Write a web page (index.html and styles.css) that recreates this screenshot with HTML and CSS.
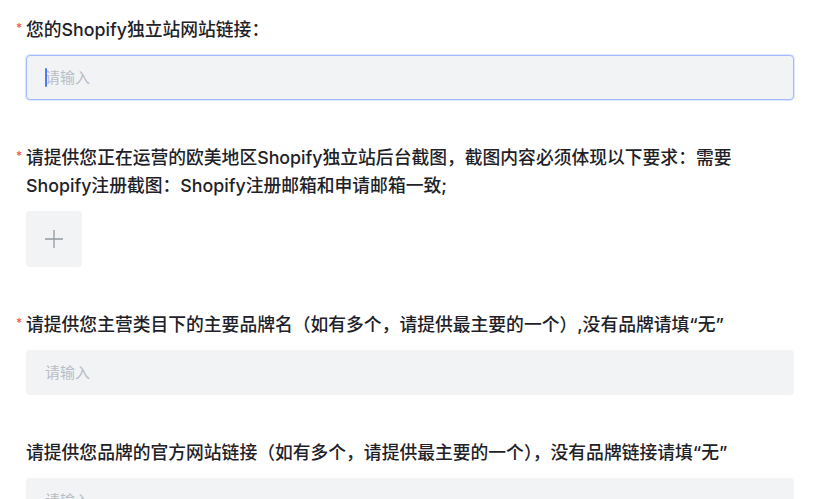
FILE: index.html
```html
<!DOCTYPE html>
<html lang="zh-CN">
<head>
    <meta charset="UTF-8">
    <meta name="viewport" content="width=device-width, initial-scale=1.0">
    <title>申请信息</title>
    <link rel="stylesheet" href="styles.css">
</head>
<body>
    <form class="form">
        <div class="form-item">
            <label class="form-label"><span class="required">*</span>您的Shopify独立站网站链接：</label>
            <div class="field is-focus">
                <span class="caret"></span>
                <input type="text" placeholder="请输入">
            </div>
        </div>

        <div class="form-item">
            <label class="form-label"><span class="required">*</span>请提供您正在运营的欧美地区Shopify独立站后台截图，截图内容必须体现以下要求：需要Shopify注册截图：Shopify注册邮箱和申请邮箱一致;</label>
            <div class="upload">
                <svg width="20" height="20" viewBox="0 0 20 20">
                    <path d="M10 1v18M1 10h18" stroke="#9499a1" stroke-width="1.3" fill="none"/>
                </svg>
            </div>
        </div>

        <div class="form-item">
            <label class="form-label"><span class="required">*</span>请提供您主营类目下的主要品牌名（如有多个，请提供最主要的一个）,没有品牌请填“无”</label>
            <div class="field">
                <input type="text" placeholder="请输入">
            </div>
        </div>

        <div class="form-item">
            <label class="form-label">请提供您品牌的官方网站链接（如有多个，请提供最主要的一个），没有品牌链接请填“无”</label>
            <div class="field">
                <input type="text" placeholder="请输入">
            </div>
        </div>
    </form>
</body>
</html>
```

FILE: styles.css
```css
body {
    margin: 0;
    padding: 16px 25px 0 26px;
    font-family: Inter, "Noto Sans CJK SC", sans-serif;
    color: #1e2228;
    background: #fff;
}
.form-item {
    margin-bottom: 44px;
}
.form-label {
    display: block;
    font-size: 17.8px;
    font-weight: 500;
    line-height: 28px;
    margin-bottom: 11px;
}
.required {
    display: inline-block;
    width: 10px;
    margin-left: -10px;
    color: #f25656;
    font-size: 12px;
    line-height: 12px;
    vertical-align: 4px;
}
.field {
    position: relative;
    height: 45px;
    background: #f2f3f5;
    border: 1px solid transparent;
    border-radius: 4px;
    box-sizing: border-box;
}
.field.is-focus {
    border-color: #a3baff;
    box-shadow: 0 0 0 1px rgba(163, 186, 255, 0.35);
}
.field input {
    width: 100%;
    height: 100%;
    box-sizing: border-box;
    padding: 0 18px;
    border: none;
    outline: none;
    background: transparent;
    font-family: Inter, "Noto Sans CJK SC", sans-serif;
    font-size: 15px;
    color: #1e2228;
}
.field input::placeholder {
    color: #b9bdc5;
}
.caret {
    position: absolute;
    left: 18px;
    top: 12px;
    width: 2px;
    height: 19px;
    background: #4e7bf5;
    border-radius: 1px;
}
.upload {
    width: 56px;
    height: 56px;
    background: #f2f3f5;
    border-radius: 4px;
    display: flex;
    align-items: center;
    justify-content: center;
}
```
